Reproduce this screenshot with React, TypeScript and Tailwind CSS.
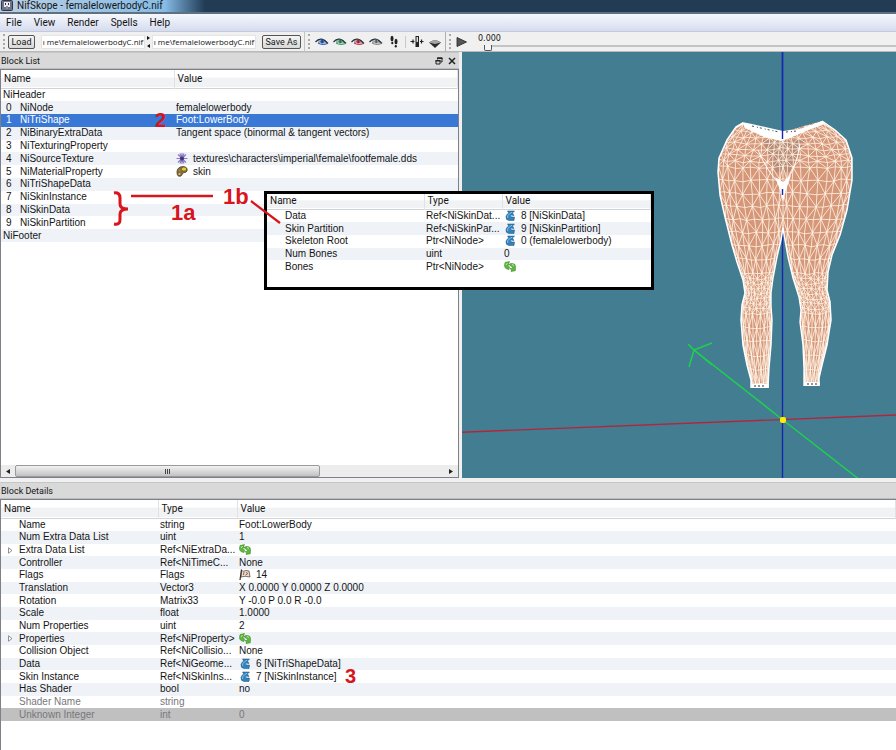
import React from "react";

type Icon = "ref" | "multi" | "flag" | "flower" | "palette";

function ValueIcon({ kind }: { kind: Icon }) {
  const cls = "mr-[5px] inline-block h-[11px] w-[12px] align-top";
  if (kind === "ref")
    return (
      <svg className={cls} viewBox="0 0 12 11" aria-hidden="true">
        <path d="M3.500 1 H10.500 L8.500 3 L10 5.500 L6.500 5 Q5.500 7.500 10.500 7 L10 10.500 H5 Q1.500 10 2 6.500 Q2.500 4 4.800 3 Z" fill="#2f83bf" stroke="#1d4f76" strokeWidth="0.5" />
        <path d="M3.600 8 Q3 5.500 5.500 3.800 L8 2.200" fill="none" stroke="#9fd2f0" strokeWidth="0.8" />
      </svg>
    );
  if (kind === "multi")
    return (
      <svg className={cls} viewBox="0 0 12 11" aria-hidden="true">
        <path d="M1 1.500 L5.500 0.500 L4.800 2.200 L6 4 L3.500 4.200 Q3 5.500 5.500 5.800 L5 8.500 Q0.500 8 0.500 4.500 Z" fill="#5fba3c" stroke="#2a7a1c" strokeWidth="0.5" />
        <path d="M6.500 2.500 Q11.500 2 11.500 5.500 L11.300 9.800 L7 10.500 L7.500 9 L6 7.500 L8.800 7.200 Q9 5.500 6.500 5 Z" fill="#5fba3c" stroke="#2a7a1c" strokeWidth="0.5" />
        <path d="M2 4 L3.500 2 M8 3.500 L10 4.500" stroke="#c4f0a8" strokeWidth="0.9" />
      </svg>
    );
  if (kind === "flag")
    return (
      <svg className={cls} viewBox="0 0 12 11" aria-hidden="true">
        <path d="M2.500 1.500 Q5 3 7 1.500 L10 2 L11 8 Q6 6.500 2 8 Z" fill="#e9dfd0" stroke="#5c4b40" strokeWidth="0.8" />
        <path d="M2.500 0.500 L1 11" stroke="#3b302a" strokeWidth="1.200" />
        <path d="M5 3 L4.500 6 M7.500 3 L8.500 5 L6.500 6" stroke="#8a4f43" strokeWidth="0.9" fill="none" />
      </svg>
    );
  if (kind === "flower")
    return (
      <svg className={cls} viewBox="0 0 12 11" aria-hidden="true">
        <g stroke="#8a78c6" strokeWidth="1.100">
          <path d="M6 0 V11 M0.500 5.500 H11.500 M2 1.500 L10 9.500 M10 1.500 L2 9.500 M4 0.500 L8 10.500 M8 0.500 L4 10.500" />
        </g>
        <circle cx="6" cy="5.500" r="2" fill="#43347a" />
      </svg>
    );
  return (
    <svg className={cls} viewBox="0 0 12 11" aria-hidden="true">
      <path d="M1 6 Q1 1 7 0.500 Q12 1 11 5 Q10 7 7.500 6.500 Q6.500 8 5 10 Q1 11.500 1 6 Z" fill="#8d6a35" stroke="#4f3c1c" strokeWidth="0.8" />
      <ellipse cx="8" cy="3" rx="2.200" ry="1.500" fill="#cfd83b" />
      <circle cx="3.500" cy="4.500" r="1" fill="#6fa557" />
      <circle cx="3.500" cy="8" r="1" fill="#d8c9a0" />
    </svg>
  );
}

type Block = { id?: number; name: string; value?: string; icon?: Icon };

const blocks: Block[] = [
  { name: "NiHeader" },
  { id: 0, name: "NiNode", value: "femalelowerbody" },
  { id: 1, name: "NiTriShape", value: "Foot:LowerBody" },
  { id: 2, name: "NiBinaryExtraData", value: "Tangent space (binormal & tangent vectors)" },
  { id: 3, name: "NiTexturingProperty" },
  { id: 4, name: "NiSourceTexture", value: "textures\\characters\\imperial\\female\\footfemale.dds", icon: "flower" },
  { id: 5, name: "NiMaterialProperty", value: "skin", icon: "palette" },
  { id: 6, name: "NiTriShapeData" },
  { id: 7, name: "NiSkinInstance" },
  { id: 8, name: "NiSkinData" },
  { id: 9, name: "NiSkinPartition" },
  { name: "NiFooter" },
];

type Field = { name: string; type: string; value?: string; icon?: Icon; expandable?: boolean; off?: boolean };

const details: Field[] = [
  { name: "Name", type: "string", value: "Foot:LowerBody" },
  { name: "Num Extra Data List", type: "uint", value: "1" },
  { name: "Extra Data List", type: "Ref<NiExtraDa...", icon: "multi", expandable: true },
  { name: "Controller", type: "Ref<NiTimeC...", value: "None" },
  { name: "Flags", type: "Flags", value: "14", icon: "flag" },
  { name: "Translation", type: "Vector3", value: "X 0.0000 Y 0.0000 Z 0.0000" },
  { name: "Rotation", type: "Matrix33", value: "Y -0.0 P 0.0 R -0.0" },
  { name: "Scale", type: "float", value: "1.0000" },
  { name: "Num Properties", type: "uint", value: "2" },
  { name: "Properties", type: "Ref<NiProperty>", icon: "multi", expandable: true },
  { name: "Collision Object", type: "Ref<NiCollisio...", value: "None" },
  { name: "Data", type: "Ref<NiGeome...", value: "6 [NiTriShapeData]", icon: "ref" },
  { name: "Skin Instance", type: "Ref<NiSkinIns...", value: "7 [NiSkinInstance]", icon: "ref" },
  { name: "Has Shader", type: "bool", value: "no" },
  { name: "Shader Name", type: "string", off: true },
  { name: "Unknown Integer", type: "int", value: "0", off: true },
];

const skinFields: Field[] = [
  { name: "Data", type: "Ref<NiSkinDat...", value: "8 [NiSkinData]", icon: "ref" },
  { name: "Skin Partition", type: "Ref<NiSkinPar...", value: "9 [NiSkinPartition]", icon: "ref" },
  { name: "Skeleton Root", type: "Ptr<NiNode>", value: "0 (femalelowerbody)", icon: "ref" },
  { name: "Num Bones", type: "uint", value: "0" },
  { name: "Bones", type: "Ptr<NiNode>", icon: "multi" },
];

const uiFont = "font-[Roboto,'Open_Sans',sans-serif]";
const headCell = "border-r border-[#dfe2e6] p-0 pl-[3px] text-left align-middle font-normal";
const headRow = `border-b border-[#d0d3d8] bg-linear-to-b from-white from-40% to-[#f1f2f4] to-50% ${uiFont}`;

function BlockTable() {
  return (
    <table className="h-[172px] w-full table-fixed border-collapse leading-[12px]">
      <colgroup>
        <col className="w-[173px]" />
        <col />
      </colgroup>
      <thead>
        <tr className={`h-[18px] ${headRow}`}>
          <th className={headCell}>Name</th>
          <th className={headCell}>Value</th>
        </tr>
      </thead>
      <tbody>
        {blocks.map((b, i) => (
          <tr key={b.name} className={b.id === 1 ? "bg-[#3a78d6] text-white" : i % 2 ? "bg-[#eff3f8]" : "bg-white"}>
            <td className="p-0 pl-[2px] whitespace-nowrap">
              {b.id !== undefined && <span className="inline-block w-[17px] pl-[3px]">{b.id}</span>}
              {b.name}
            </td>
            <td className="p-0 pl-[2px] whitespace-nowrap">
              {b.icon && <ValueIcon kind={b.icon} />}
              {b.value}
            </td>
          </tr>
        ))}
      </tbody>
    </table>
  );
}

function FieldRows({ rows }: { rows: Field[] }) {
  return (
    <tbody>
      {rows.map((f, i) => (
        <tr
          key={f.name}
          className={`${f.off && f.value ? "bg-[#c0c0c0]" : i % 2 ? "bg-[#eff3f8]" : "bg-white"} ${f.off ? "text-[#77777d]" : ""}`}
        >
          <td className="p-0 whitespace-nowrap">
            <span className="inline-block w-[18px]">
              {f.expandable && (
                <svg className="ml-[7px] inline-block h-[7px] w-[5px]" viewBox="0 0 5 7" aria-hidden="true">
                  <path d="M0.500 0.800 L4 3.500 L0.500 6.200 Z" fill="#fff" stroke="#777" strokeWidth="0.8" />
                </svg>
              )}
            </span>
            {f.name}
          </td>
          <td className="p-0 pl-[2px] whitespace-nowrap">{f.type}</td>
          <td className="p-0 pl-[2px] whitespace-nowrap">
            {f.icon && <ValueIcon kind={f.icon} />}
            {f.value}
          </td>
        </tr>
      ))}
    </tbody>
  );
}

/* ---- wireframe model ---- */

type Pt = [number, number];

const leftOuter: Pt[] = [[743, 123], [736, 127], [727, 140], [719, 158], [718, 172], [720, 195], [725, 217], [732, 245], [737, 262], [743, 280], [745, 293], [742, 305], [741, 320], [743, 345], [747, 365], [751, 380], [751, 388]];
const leftInner: Pt[] = [[783, 132], [783, 228], [781, 240], [777, 257], [773, 278], [771, 293], [771, 306], [772, 320], [771, 345], [769, 368], [768, 388]];
const rightInner: Pt[] = [[783, 132], [783, 228], [785, 240], [788, 257], [793, 278], [799, 297], [801, 310], [800, 322], [803, 345], [804, 368], [804, 386]];
const rightOuter: Pt[] = [[822, 121], [835, 130], [846, 140], [852, 158], [852, 180], [847, 210], [840, 235], [832, 255], [828, 272], [827, 290], [830, 302], [831, 320], [827, 345], [822, 365], [819, 378], [819, 386]];

function xAt(line: Pt[], y: number) {
  if (y <= line[0][1]) return line[0][0];
  for (let i = 1; i < line.length; i++) {
    const [x0, y0] = line[i - 1];
    const [x1, y1] = line[i];
    if (y <= y1) return x0 + ((x1 - x0) * (y - y0)) / (y1 - y0);
  }
  return line[line.length - 1][0];
}

function noise(n: number) {
  const s = Math.sin(n * 127.1) * 43758.5453;
  return s - Math.floor(s) - 0.5;
}

function meshPath(outer: Pt[], inner: Pt[], seed: number) {
  const ys: number[] = [];
  for (let y = 118; y < 389; ) {
    ys.push(y);
    y += y < 165 ? 6 : y < 235 ? 13 : y < 265 ? 14 : y < 310 ? 5 : 14;
  }
  ys.push(389);
  const cols = 10;
  const grid = ys.map((y, r) =>
    Array.from({ length: cols + 1 }, (_, c) => {
      const a = xAt(outer, y);
      const b = xAt(inner, y);
      const edge = c === 0 || c === cols;
      const u = 0.5 - Math.cos((Math.PI * c) / cols) / 2;
      const mix = (c / cols) * 0.5 + u * 0.5;
      const jx = edge ? 0 : noise(seed + r * 31 + c) * Math.abs(b - a) * 0.035;
      const jy = noise(seed + r * 17 + c * 7) * 2;
      return [a + (b - a) * mix + jx, y + jy + Math.sin(mix * 3.14) * 2] as Pt;
    }),
  );
  const at = (p: Pt) => `${p[0].toFixed(1)} ${p[1].toFixed(1)}`;
  let d = "";
  grid.forEach((row, r) => {
    d += "M" + row.map(at).join("L");
    if (r === 0) return;
    for (let c = 0; c <= cols; c++) {
      d += `M${at(grid[r - 1][c])}L${at(row[c])}`;
      if (c < cols)
        d += (r + c) % 2 ? `M${at(grid[r - 1][c])}L${at(row[c + 1])}` : `M${at(grid[r - 1][c + 1])}L${at(row[c])}`;
    }
  });
  return d;
}

const toPath = (pts: Pt[]) => "M" + pts.map((p) => p.join(" ")).join("L") + "Z";
const leftShape = toPath([...leftOuter, ...[...leftInner].reverse()]);
const rightShape = toPath([...rightOuter, ...[...rightInner].reverse()]);

function Viewport() {
  return (
    <svg className="block h-full w-full" viewBox="462 52 434 426" preserveAspectRatio="xMidYMid slice" role="img" aria-label="Wireframe model">
      <rect x="0" y="0" width="1400" height="900" fill="#437d92" />
      <path d="M782.500 0V900" stroke="#1428b4" strokeWidth="1.400" />
      <clipPath id="leg-l"><path d={leftShape} /></clipPath>
      <clipPath id="leg-r"><path d={rightShape} /></clipPath>
      <path d={leftShape} fill="#d69678" />
      <path d={rightShape} fill="#d69678" />
      <path d="M762 140 L804 140 L790 172 L776 172 Z" fill="#b98a74" />
      <g fill="none" stroke="#fff6ea" strokeWidth="0.800">
        <path clipPath="url(#leg-l)" d={meshPath(leftOuter, leftInner, 3)} />
        <path clipPath="url(#leg-r)" d={meshPath(rightOuter, rightInner, 71)} />
      </g>
      <path d="M758 150 Q768 174 782 186 Q796 172 800 144" fill="none" stroke="#fff" strokeWidth="1" />
      <path d="M775 177 L783 182 L791 175 L786 190 L783 202 L780 190 Z" fill="#fff" />
      <path d="M742 122 L752 124 L783 131 L800 129 L822 121 L824 124 L806 131 L790 138 L781 141 L764 137 L745 128 Z" fill="#fff" />
      <path d="M752 126 L765 129 L779 132 M786 132 L797 131" stroke="#38505c" strokeWidth="1" strokeDasharray="2 3 1 2" fill="none" />
      <g fill="none" stroke="#fff" strokeLinejoin="round">
        <path d={"M" + leftOuter.map((p) => p.join(" ")).join("L")} strokeWidth="1.500" />
        <path d={"M" + rightOuter.map((p) => p.join(" ")).join("L")} strokeWidth="1.500" />
        <path d={"M" + leftInner.slice(1).map((p) => p.join(" ")).join("L")} strokeWidth="1.400" />
        <path d={"M" + rightInner.slice(1).map((p) => p.join(" ")).join("L")} strokeWidth="1.400" />
      </g>
      <rect x="751" y="384" width="18" height="4" rx="1.500" fill="#fff" />
      <rect x="804" y="382" width="16" height="4" rx="1.500" fill="#fff" />
      <path d="M754 386H766M807 384H817" stroke="#203640" strokeWidth="1.200" strokeDasharray="2 2" />
      <path d="M782.500 52V139M782.500 189V195" stroke="#1428b4" strokeWidth="1.400" />
      <path d="M300 438.600L1100 407" stroke="#b3263a" strokeWidth="1.400" />
      <g fill="none" stroke="#1fd04e" strokeWidth="1.500">
        <path d="M694 350L783 420L960 558" />
        <path d="M688 344L694 350L689 367M694 350L712 343M694 350L712 365" />
      </g>
      <rect x="780" y="417" width="6" height="6" rx="2" fill="#ffee00" />
    </svg>
  );
}

/* ---- toolbar pieces ---- */

const eyes = [
  { label: "Draw axes", color: "#2f5fc0" },
  { label: "Draw nodes", color: "#3aa45c" },
  { label: "Draw havok", color: "#c93545" },
  { label: "Draw constraints", color: "#8b8b8b" },
];

function Eye({ color }: { color: string }) {
  return (
    <svg className="h-[9px] w-[14px]" viewBox="0 0 14 9" aria-hidden="true">
      <path d="M1 5.500 Q6 -1 12 5.500 L11 7 Q6 8.500 3 6 Z" fill="#f4f6f8" stroke="none" />
      <path d="M0.500 5 Q6 -1.500 13 6.500" fill="none" stroke="#26303c" strokeWidth="1.200" />
      <path d="M3 6 Q7 8.500 12.500 6.500" fill="none" stroke={color} strokeWidth="1.200" />
      <circle cx="7.200" cy="4.500" r="2.100" fill={color} />
      <path d="M4 3V6M7.200 2.500V6M10 3.500V6.500" stroke="#26303c" strokeWidth="0.7" />
    </svg>
  );
}

function Grip() {
  return <span className="h-[15px] w-[2px] shrink-0 border-l-2 border-dotted border-[#a9a9a9]" />;
}

const toolButton = "flex h-[16px] w-[18px] shrink-0 items-center justify-center";
const pushButton = "h-[14px] shrink-0 rounded-[2px] border border-[#555] bg-linear-to-b from-[#f5f5f5] to-[#d8d8d8] text-center leading-[12px]";
const fileBox = "h-[14px] w-[104px] min-w-0 border border-[#e4e4e4] bg-white text-center font-['Open_Sans','Noto_Sans',sans-serif] text-[8px]";

function Toolbar() {
  return (
    <div className={`flex h-[20px] items-center border-b border-[#b9b9b9] bg-[#f0f0f0] pl-[3px] ${uiFont}`}>
      <Grip />
      <button type="button" className={`${pushButton} ml-[3px] w-[27px] text-[9px]`}>Load</button>
      <input aria-label="Load file name" className={`${fileBox} ml-[6px]`} defaultValue="ı me\femalelowerbodyC.nif" />
      <svg className="h-[14px] w-[7px] shrink-0" viewBox="0 0 7 14" aria-hidden="true">
        <path d="M2 1L5 3L2 5ZM5 9L2 11L5 13Z" fill="#111" />
      </svg>
      <input aria-label="Save file name" className={fileBox} defaultValue="ı me\femalelowerbodyC.nif" />
      <button type="button" className={`${pushButton} ml-[6px] w-[39px] text-[9px]`}>Save As</button>
      <span className="ml-[3px] h-[20px] w-px bg-[#c4c4c4]" />
      <span className="ml-[3px] flex"><Grip /></span>
      <div className="ml-[3px] flex items-center">
        {eyes.map((e) => (
          <button key={e.label} type="button" aria-label={e.label} className={toolButton}>
            <Eye color={e.color} />
          </button>
        ))}
        <button type="button" aria-label="Walk" className={toolButton}>
          <svg className="h-[13px] w-[10px]" viewBox="0 0 10 13" aria-hidden="true">
            <ellipse cx="3" cy="3.500" rx="1.500" ry="2.800" fill="#222" />
            <ellipse cx="3.300" cy="8" rx="1.100" ry="1.200" fill="#222" />
            <ellipse cx="7" cy="6.500" rx="1.500" ry="2.800" fill="#222" />
            <ellipse cx="6.800" cy="11.300" rx="1.100" ry="1.200" fill="#222" />
          </svg>
        </button>
        <span className="mx-[2px] h-[12px] w-px bg-[#c9c9c9]" />
        <button type="button" aria-label="Scale" className={toolButton}>
          <svg className="h-[11px] w-[14px]" viewBox="0 0 14 11" aria-hidden="true">
            <path d="M0.500 5.500H4.500M10 5.500H13.500M3 3.500V7.500M11.500 3.500V7.500" stroke="#222" strokeWidth="1.200" />
            <rect x="6" y="0.500" width="2.500" height="10" fill="#ddd" stroke="#222" />
            <rect x="6" y="6" width="2.500" height="4" fill="#222" />
          </svg>
        </button>
        <button type="button" aria-label="Down" className={toolButton}>
          <svg className="mt-[3px] h-[9px] w-[12px]" viewBox="0 0 12 9" aria-hidden="true">
            <path d="M0 3.500L4 1.500H8L12 3.500L6 9Z" fill="#2a2a2a" />
            <path d="M0 3.500L4 1.500H8L12 3.500L6 5Z" fill="#a4a4a4" />
          </svg>
        </button>
      </div>
      <span className="ml-[1px] h-[20px] w-px bg-[#b0b0b0]" />
      <span className="ml-[3px] flex"><Grip /></span>
      <button type="button" aria-label="Play" className="ml-[5px] shrink-0">
        <svg className="h-[10px] w-[11px]" viewBox="0 0 11 10" aria-hidden="true">
          <path d="M1 0.500L10.500 5L1 9.500Z" fill="#555" stroke="#222" strokeWidth="0.8" />
        </svg>
      </button>
      <div className="ml-[11px] flex min-w-0 flex-1 flex-col">
        <label htmlFor="time" className="font-['DejaVu_Sans',sans-serif] text-[8px] leading-[9px]">0.000</label>
        <input
          id="time"
          type="range"
          min={0}
          max={1}
          step={0.001}
          defaultValue={0}
          className="ml-[6px] h-[7px] appearance-none bg-transparent [&::-webkit-slider-runnable-track]:h-[2px] [&::-webkit-slider-runnable-track]:bg-[#c4c4c4] [&::-webkit-slider-thumb]:h-[6px] [&::-webkit-slider-thumb]:w-[8px] [&::-webkit-slider-thumb]:appearance-none [&::-webkit-slider-thumb]:rounded-b-[2px] [&::-webkit-slider-thumb]:border [&::-webkit-slider-thumb]:border-t-0 [&::-webkit-slider-thumb]:border-[#555] [&::-webkit-slider-thumb]:bg-[#f4f4f4]"
        />
      </div>
    </div>
  );
}

function DockTitle({ title, children }: { title: string; children?: React.ReactNode }) {
  return (
    <div className={`flex h-[17px] items-center border-y border-t-[#c6c6c6] border-b-[#bdbdbd] bg-[#d9d9d9] pr-[3px] pl-[1px] ${uiFont}`}>
      <h2 className="flex-1 text-[9px]">{title}</h2>
      {children}
    </div>
  );
}

const note = "pointer-events-none absolute leading-[20px] font-bold text-[#d8141c]";

export default function App() {
  return (
    <div className="relative flex min-h-screen flex-col overflow-hidden bg-[#f0f0f0] font-['Liberation_Sans',Arial,sans-serif] text-[10px] leading-[12px] text-[#141414]">
      <header className="flex h-[14px] items-center border-b-2 border-[#5f7181] bg-linear-to-r from-[#b9cfe2] via-[#86bce6] via-[165px] to-[#223c56] to-[205px]">
        <svg className="ml-px h-[12px] w-[12px]" viewBox="0 0 12 12" aria-hidden="true">
          <rect x="0.500" y="0.500" width="11" height="10" rx="1" fill="#6f7386" stroke="#33364a" />
          <path d="M3 2H9V7H7V9H5V7H3Z" fill="#e9eaf2" />
          <path d="M4.500 3V5M7.500 3V5M6 6V9" stroke="#33364a" strokeWidth="1" />
        </svg>
        <h1 className={`ml-[4px] text-[10px] ${uiFont}`}>NifSkope - femalelowerbodyC.nif</h1>
      </header>

      <nav className={`flex h-[18px] items-center gap-[12px] border-b border-[#c5cadb] bg-linear-to-b from-[#f6f8fd] to-[#d5dcee] pl-[6px] ${uiFont}`}>
        {["File", "View", "Render", "Spells", "Help"].map((m) => (
          <button key={m} type="button">{m}</button>
        ))}
      </nav>

      <Toolbar />

      <main className="flex min-h-0 flex-1">
        <section className="flex w-[459px] shrink-0 flex-col">
          <DockTitle title="Block List">
            <button type="button" aria-label="Float panel" className="mr-[5px]">
              <svg className="h-[8px] w-[8px]" viewBox="0 0 8 8" aria-hidden="true">
                <path d="M2.500 2.500V1H7V5H5.500M1 3.500H5V7H1Z" fill="none" stroke="#222" strokeWidth="1" />
                <path d="M2 1.200H7.500M0.500 3.700H5.500" stroke="#222" strokeWidth="1.400" />
              </svg>
            </button>
            <button type="button" aria-label="Close panel">
              <svg className="h-[8px] w-[8px]" viewBox="0 0 8 8" aria-hidden="true">
                <path d="M1 1L7 7M7 1L1 7" stroke="#222" strokeWidth="1.500" />
              </svg>
            </button>
          </DockTitle>
          <div className="flex flex-1 flex-col border border-[#7d8088] bg-white">
            <BlockTable />
            <div className="mt-auto flex h-[12px] items-center bg-[#ececec]">
              <button type="button" aria-label="Scroll left" className="flex h-full w-[14px] items-center justify-center">
                <svg className="h-[5px] w-[4px]" viewBox="0 0 4 5"><path d="M4 0V5L0 2.500Z" fill="#222" /></svg>
              </button>
              <div className="h-full flex-1">
                <div className="flex h-full w-[71%] items-center justify-center gap-px rounded-[2px] border border-[#9a9a9a] bg-linear-to-b from-[#f2f2f2] to-[#c2c2c6]">
                  <span className="h-[5px] w-px bg-[#444]" />
                  <span className="h-[5px] w-px bg-[#444]" />
                  <span className="h-[5px] w-px bg-[#444]" />
                </div>
              </div>
              <button type="button" aria-label="Scroll right" className="flex h-full w-[14px] items-center justify-center">
                <svg className="h-[5px] w-[4px]" viewBox="0 0 4 5"><path d="M0 0V5L4 2.500Z" fill="#222" /></svg>
              </button>
            </div>
          </div>
        </section>
        <section className="relative ml-[3px] min-w-0 flex-1 overflow-hidden bg-[#437d92]">
          <div className="absolute inset-0">
            <Viewport />
          </div>
        </section>
      </main>

      <section className="mt-[4px]">
        <DockTitle title="Block Details" />
        <div className="border-t border-l border-[#7d8088] bg-white pb-[29px]">
          <table className="h-[221px] w-full table-fixed border-collapse leading-[12px]">
            <colgroup>
              <col className="w-[157px]" />
              <col className="w-[79px]" />
              <col />
            </colgroup>
            <thead>
              <tr className={`h-[18px] ${headRow}`}>
                <th className={headCell}>Name</th>
                <th className={headCell}>Type</th>
                <th className={headCell}>Value</th>
              </tr>
            </thead>
            <FieldRows rows={details} />
          </table>
        </div>
      </section>

      <aside className="absolute top-[191px] left-[264px] h-[99px] w-[390px] border-[3px] border-black bg-white">
        <table className="h-[79px] w-full table-fixed border-collapse leading-[12px]">
          <colgroup>
            <col className="w-[157px]" />
            <col className="w-[78px]" />
            <col />
          </colgroup>
          <thead>
            <tr className={`h-[15px] ${headRow}`}>
              <th className={headCell}>Name</th>
              <th className={headCell}>Type</th>
              <th className={headCell}>Value</th>
            </tr>
          </thead>
          <FieldRows rows={skinFields} />
        </table>
      </aside>

      <span className={`${note} top-[110px] left-[155px] text-[20px]`}>2</span>
      <span className={`${note} top-[203px] left-[171px] text-[22px]`}>1a</span>
      <span className={`${note} top-[187px] left-[223px] text-[22px]`}>1b</span>
      <span className={`${note} top-[666px] left-[345px] text-[20px]`}>3</span>
      <svg className="pointer-events-none absolute top-[190px] left-[110px] h-[40px] w-[175px]" viewBox="110 190 175 40" aria-hidden="true">
        <g fill="none" stroke="#d8141c">
          <path d="M114 193Q120 192 120 198V204Q120 209 128 209Q120 209 120 214V220Q120 225 114 224" strokeWidth="3" />
          <path d="M131 196H213" strokeWidth="2.500" />
          <path d="M251 201L280 223" strokeWidth="2.200" />
        </g>
      </svg>
    </div>
  );
}
